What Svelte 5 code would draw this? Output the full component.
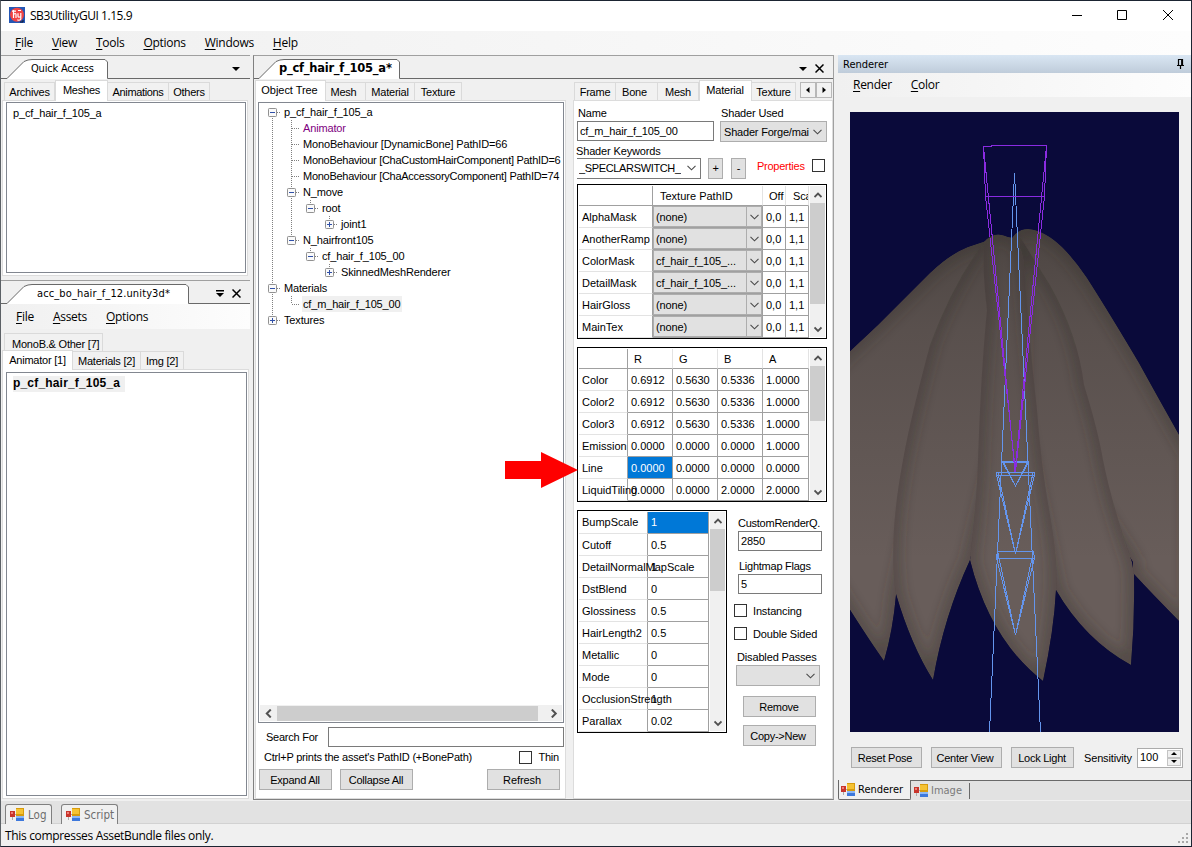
<script>
  const tree = [
    { d: 0, box: '-', text: 'p_cf_hair_f_105_a', through: [], next: true, first: true },
    { d: 1, text: 'Animator', through: [0], next: true, purple: true },
    { d: 1, text: 'MonoBehaviour [DynamicBone] PathID=66', through: [0], next: true },
    { d: 1, text: 'MonoBehaviour [ChaCustomHairComponent] PathID=6', through: [0], next: true, long: true },
    { d: 1, text: 'MonoBehaviour [ChaAccessoryComponent] PathID=74', through: [0], next: true, long: true },
    { d: 1, box: '-', text: 'N_move', through: [0], next: true },
    { d: 2, box: '-', text: 'root', through: [0, 1] },
    { d: 3, box: '+', text: 'joint1', through: [0, 1] },
    { d: 1, box: '-', text: 'N_hairfront105', through: [0] },
    { d: 2, box: '-', text: 'cf_hair_f_105_00', through: [0] },
    { d: 3, box: '+', text: 'SkinnedMeshRenderer', through: [0] },
    { d: 0, box: '-', text: 'Materials', through: [], next: true },
    { d: 1, text: 'cf_m_hair_f_105_00', through: [0], sel: true },
    { d: 0, box: '+', text: 'Textures', through: [] }
  ];
  const textures = [
    ['AlphaMask', '(none)'], ['AnotherRamp', '(none)'], ['ColorMask', 'cf_hair_f_105_...'],
    ['DetailMask', 'cf_hair_f_105_...'], ['HairGloss', '(none)'], ['MainTex', '(none)']
  ];
  const colors = [
    ['Color', '0.6912', '0.5630', '0.5336', '1.0000'],
    ['Color2', '0.6912', '0.5630', '0.5336', '1.0000'],
    ['Color3', '0.6912', '0.5630', '0.5336', '1.0000'],
    ['Emission', '0.0000', '0.0000', '0.0000', '1.0000'],
    ['Line', '0.0000', '0.0000', '0.0000', '0.0000'],
    ['LiquidTiling', '0.0000', '0.0000', '2.0000', '2.0000']
  ];
  const scalars = [
    ['BumpScale', '1'], ['Cutoff', '0.5'], ['DetailNormalMapScale', '1'], ['DstBlend', '0'],
    ['Glossiness', '0.5'], ['HairLength2', '0.5'], ['Metallic', '0'], ['Mode', '0'],
    ['OcclusionStrength', '1'], ['Parallax', '0.02']
  ];
  const strands = [
    { id: 's1', d: 'M1012 238 Q1018 229 1028 229 Q1044 230 1062 247 Q1075 260 1087 278 Q1110 314 1139 363 Q1166 412 1190 454 L1190 632 Q1155 597 1133 573 L1133 562 L1080 480 L1014 300Z' },
    { id: 's2', d: 'M1020 236 Q1028 250 1050 285 Q1078 335 1084 385 Q1098 430 1103 460 Q1112 505 1132 562 L1134 574 Q1135 620 1131 665 Q1085 640 1056 590 L1020 420Z' },
    { id: 's3', d: 'M830 370 L878 325 L930 273 Q950 254 968 247 L983 242 L994 238 L990 300 L960 380 L915 500 L896 595 Q893 630 884 661 Q866 636 830 578Z' },
    { id: 's4', d: 'M1000 236 L980 247 Q950 290 930 345 Q910 420 903 460 Q888 540 896 594 Q911 645 933 680 Q944 616 970 560 L1004 420 L1008 250Z' },
    { id: 's5', d: 'M984 242 Q994 230 1008 237 Q1020 238 1024 262 Q1028 330 1037 410 Q1041 465 1049 510 Q1058 560 1056 590 Q1054 630 1043 681 Q990 640 970 560 Q977 500 978 460 Q981 370 987 310 Q982 270 984 242Z' }
  ];
</script>

{#snippet chev(dir, s = 8)}
  <svg class="chev" width={s} height={s} viewBox="0 0 8 8">
    <path d={{ up: 'M.5 6 4 2.5 7.5 6', down: 'M.5 2.5 4 6 7.5 2.5', left: 'M6 .5 2.5 4 6 7.5', right: 'M2.5 .5 6 4 2.5 7.5' }[dir]} fill="none" stroke="#505050" stroke-width="1.8" />
  </svg>
{/snippet}

{#snippet thin()}
  <svg class="thin" width="9" height="6" viewBox="0 0 9 6"><path d="M.5 .8 4.5 4.8 8.5 .8" fill="none" stroke="#4a4a4a" stroke-width="1.1" /></svg>
{/snippet}

{#snippet vscroll(h)}
  <div class="vs"><div class="arrow">{@render chev('up')}</div><div class="thumb" style="height:{h}px"></div><div class="arrow end">{@render chev('down')}</div></div>
{/snippet}

{#snippet form()}
  <svg class="formicon" width="14" height="14" viewBox="0 0 14 14" shape-rendering="crispEdges">
    <rect x="6" y="0" width="8" height="8" fill="#d79b0c" /><rect x="6" y="1" width="7" height="5" fill="#f5c233" />
    <rect x="6" y="8" width="8" height="5" fill="#3d78dc" /><rect x="6" y="8" width="8" height="2" fill="#8db8f5" />
    <rect x="0" y="3" width="5" height="6" fill="#c9352c" /><rect x="1" y="4" width="2" height="2" fill="#ee8178" /><path d="M2.5 9v3M5 6.5h1" stroke="#aaa" />
  </svg>
{/snippet}

{#snippet close()}
  <svg class="x" width="9" height="9" viewBox="0 0 9 9"><path d="M.5 .5 8.5 8.5M8.5 .5 .5 8.5" stroke="#000" stroke-width="1.5" /></svg>
{/snippet}

{#snippet sheet(w, label, bold = false)}
  <div class="sheet" style="width:{w}px">
    <svg width={w} height="23" viewBox="0 0 {w} 23">
      <path d="M0 23.5V22.5L17 5.5Q21 3.5 25 3.5H{w - 3}L{w - 0.5} 6V23.5Z" fill="#fff" />
      <path d="M0 22.5L17 5.5Q21 3.5 25 3.5H{w - 3}L{w - 0.5} 6V22.5" fill="none" stroke="#696969" />
    </svg>
    <span class:bold>{label}</span>
  </div>
{/snippet}

<div class="window">
  <header class="title">
    <svg width="16" height="16" viewBox="0 0 16 16">
      <rect width="16" height="16" fill="#2457b5" /><circle cx="8" cy="7.8" r="7" fill="#f04444" />
      <path d="M4.5 3v8M4.5 7.5q2.5-2 2.5 0V11M3 4.2h4M9 6.2v3q0 1.6 2.8.5V6M11.8 9v3q-1.2 2-3.5.8M9 3.5h3" fill="none" stroke="#fff" stroke-width="1.2" />
      <path d="M11 15h3v-2" stroke="#101830" fill="none" />
    </svg>
    <span class="caption">SB3UtilityGUI 1.15.9</span>
    <svg class="winbtns" width="102" height="12" viewBox="0 0 102 12" fill="none" stroke="#000">
      <path d="M0 6.5H10M45.5 1.5h9v9h-9zM91 1l10 10M101 1 91 11" />
    </svg>
  </header>
  <nav class="menu main">
    <span><u>F</u>ile</span><span><u>V</u>iew</span><span><u>T</u>ools</span><span><u>O</u>ptions</span><span><u>W</u>indows</span><span><u>H</u>elp</span>
  </nav>

  <main>
    <section class="left">
      <div class="pane quick">
        <div class="strip">
          {@render sheet(101, 'Quick Access')}
          <svg class="tri" width="8" height="4" viewBox="0 0 8 4"><path d="M0 0h8L4 4z" /></svg>
        </div>
        <div class="tabs t1"><span>Archives</span><span class="on">Meshes</span><span>Animations</span><span>Others</span></div>
        <div class="page p1"><div class="list"><p>p_cf_hair_f_105_a</p></div></div>
      </div>
      <div class="pane asset">
        <div class="strip">
          {@render sheet(182, 'acc_bo_hair_f_12.unity3d*')}
          <svg class="tri" width="8" height="7" viewBox="0 0 8 7"><path d="M0 0h8v1.6H0zM0 3h8L4 7z" /></svg>
          {@render close()}
        </div>
        <nav class="menu sub"><span><u>F</u>ile</span><span><u>A</u>ssets</span><span><u>O</u>ptions</span></nav>
        <div class="tabs t2"><span>MonoB.&amp; Other [7]</span></div>
        <div class="tabs t3"><span class="on">Animator [1]</span><span>Materials [2]</span><span>Img [2]</span></div>
        <div class="page p2"><div class="list"><p class="b">p_cf_hair_f_105_a</p></div></div>
      </div>
    </section>

    <section class="middle">
      <div class="strip">
        {@render sheet(141, 'p_cf_hair_f_105_a*', true)}
        <svg class="tri" width="8" height="4" viewBox="0 0 8 4"><path d="M0 0h8L4 4z" /></svg>
        {@render close()}
      </div>
      <div class="split">
        <div class="objects">
          <div class="tabs t4"><span class="on">Object Tree</span><span>Mesh</span><span>Material</span><span>Texture</span></div>
          <div class="page p3">
            <div class="tree">
              <div class="rows">
                {#each tree as r}
                  <div class="node">
                    <svg width={24 + 19 * r.d} height="16">
                      <g stroke="#808080" stroke-dasharray="1 1" fill="none">
                        {#each r.through as t}
                          {#if !(t === r.d)}<path d="M{13.5 + 19 * t} 0V16" />{/if}
                        {/each}
                        {#if !r.first}<path d="M{13.5 + 19 * r.d} 0V8" />{/if}
                        {#if r.next}<path d="M{13.5 + 19 * r.d} 8V16" />{/if}
                        <path d="M{14 + 19 * r.d} 8.5h8" />
                      </g>
                      {#if r.box}
                        <rect x={9.5 + 19 * r.d} y="4.5" width="8" height="8" rx=".8" fill="#fafafa" stroke="#919191" />
                        <path d="M{11 + 19 * r.d} 8.5h5{r.box === '+' ? `M${13.5 + 19 * r.d} 6v5` : ''}" stroke="#3050a8" fill="none" />
                      {/if}
                    </svg>
                    <span class:purple={r.purple} class:sel={r.sel} class:long={r.long}>{r.text}</span>
                  </div>
                {/each}
              </div>
              <div class="hs">{@render chev('left', 9)}<div></div>{@render chev('right', 9)}</div>
            </div>
            <div class="search"><span>Search For</span><i class="field"></i></div>
            <div class="note"><span>Ctrl+P prints the asset's PathID (+BonePath)</span><i class="check"></i><span>Thin</span></div>
            <div class="btns"><b class="btn">Expand All</b><b class="btn">Collapse All</b><b class="btn">Refresh</b></div>
          </div>
        </div>

        <div class="detail">
          <div class="tabs t5">
            <span>Frame</span><span>Bone</span><span>Mesh</span><span class="on">Material</span><span>Texture</span>
            <div class="scroller"><i><svg width="4" height="6"><path d="M3.5 0v6L0 3z" /></svg></i><i><svg width="4" height="6"><path d="M.5 0v6L4 3z" /></svg></i></div>
          </div>
          <div class="page p4">
            <div class="labels"><span>Name</span><span>Shader Used</span></div>
            <div class="inputs"><i class="field name">cf_m_hair_f_105_00</i><div class="combo gray"><span>Shader Forge/mai</span>{@render thin()}</div></div>
            <div class="kwlabel">Shader Keywords</div>
            <div class="kw">
              <div class="combo open"><span>_SPECLARSWITCH_</span>{@render thin()}</div>
              <b class="btn sq">+</b><b class="btn sq">-</b><span class="red">Properties</span><i class="check"></i>
            </div>

            <div class="grid tex">
              <div class="cells">
                <span class="h"></span><span class="h">Texture PathID</span><span class="h">Off</span><span class="h">Sca</span>
                {#each textures as [n, v]}
                  <span class="rh">{n}</span><span class="cc"><em>{v}</em><i>{@render thin()}</i></span><span>0,0</span><span>1,1</span>
                {/each}
              </div>
              {@render vscroll(101)}
            </div>

            <div class="grid col">
              <div class="cells">
                <span class="h"></span><span class="h">R</span><span class="h">G</span><span class="h">B</span><span class="h">A</span>
                {#each colors as row, i}
                  {#each row as v, j}<span class:rh={j === 0} class:hot={i === 4 && j === 1}>{v}</span>{/each}
                {/each}
              </div>
              {@render vscroll(55)}
            </div>

            <div class="lower">
              <div class="grid num">
                <div class="cells">
                  {#each scalars as [n, v], i}<span class="rh" class:top={i === 0}>{n}</span><span class:hot={i === 0} class:top={i === 0}>{v}</span>{/each}
                </div>
                {@render vscroll(62)}
              </div>
              <div class="side">
                <span class="lb">CustomRenderQ.</span><i class="field">2850</i>
                <span class="lb two">Lightmap Flags</span><i class="field">5</i>
                <div class="ck"><i class="check"></i><span>Instancing</span></div>
                <div class="ck"><i class="check"></i><span>Double Sided</span></div>
                <span class="lb three">Disabled Passes</span>
                <div class="combo gray">{@render thin()}</div>
                <b class="btn">Remove</b><b class="btn">Copy-&gt;New</b>
              </div>
            </div>
          </div>
        </div>
      </div>
      <svg class="pointer" width="74" height="38" viewBox="0 0 74 38"><path d="M0 10H36V1L73 19 36 37V28H0Z" fill="#fe0000" /></svg>
    </section>

    <section class="right">
      <div class="rhead"><span>Renderer</span><svg width="7" height="10" viewBox="0 0 7 10"><path d="M1.5 6V.5h4V6M4.7 0v6M0 6.5h7M3.5 7v3" fill="none" stroke="#000" stroke-width="1.2" /></svg></div>
      <nav class="menu rm"><span><u>R</u>ender</span><span><u>C</u>olor</span></nav>
      <svg class="view" width="329" height="620" viewBox="850 112 329 620">
        <defs>
          <filter id="soft" filterUnits="userSpaceOnUse" x="780" y="180" width="480" height="560"><feGaussianBlur stdDeviation="7" /></filter>
          <linearGradient id="shade" gradientUnits="userSpaceOnUse" x1="0" y1="232" x2="0" y2="560">
            <stop offset="0" stop-color="#24221f" stop-opacity=".4" /><stop offset=".3" stop-color="#2c2927" stop-opacity=".25" /><stop offset="1" stop-color="#2c2927" stop-opacity="0" />
          </linearGradient>
          {#each strands as s}<clipPath id={s.id}><path d={s.d} /></clipPath>{/each}
        </defs>
        <rect x="850" y="112" width="329" height="620" fill="#0a0a3a" />
        {#each strands as s}
          <g clip-path="url(#{s.id})">
            <path d={s.d} fill="#685d5a" />
            <path d={s.d} fill="none" stroke="#35322e" stroke-opacity=".6" stroke-width="9" filter="url(#soft)" />
            <path d={s.d} fill="url(#shade)" />
          </g>
        {/each}
        <g fill="none" stroke="#6495ed" shape-rendering="crispEdges">
          <path d="M1014.5 173 989.5 732M1014.5 173 1040.5 732" />
          <path d="M1002 461.5H1028.5M1002 462.5H1028.5L1015.5 486 1002.5 462M1004 463 1015 485M1027 463 1016 485" />
          <path d="M996.5 472.5H1034.5V475.5H996.5ZM996.5 475 1015.5 554 1034.5 475M998 473 1015.5 554 1033 473" />
          <path d="M997 551.5H1033M996 558.5H1034M997.5 551 996.5 558 1015.5 635 1034.5 558 1033.5 551 1015.5 635 997.5 551" />
        </g>
        <path d="M983.5 146.5H991V145.5H1046.5L1044.5 196.5H985.5L983.5 146.5 1015 472 1046.5 146M985.5 196 1015.5 472 1044.5 196" fill="none" stroke="#8a2be2" shape-rendering="crispEdges" />
      </svg>
      <div class="rbtns">
        <b class="btn">Reset Pose</b><b class="btn">Center View</b><b class="btn k">Lock Light</b><span>Sensitivity</span>
        <div class="spin"><span>100</span><div><i><svg width="6" height="3"><path d="M0 3h6L3 0z" /></svg></i><i><svg width="6" height="3"><path d="M0 0h6L3 3z" /></svg></i></div></div>
      </div>
      <div class="rtabs"><div class="on">{@render form()}<span>Renderer</span></div><div class="off">{@render form()}<span>Image</span></div></div>
    </section>
  </main>

  <div class="dock"><div>{@render form()}<span>Log</span></div><div>{@render form()}<span>Script</span></div></div>
  <footer><span>This compresses AssetBundle files only.</span>
    <svg width="11" height="11" fill="#a8a8a8"><path d="M8 0h2v2H8zM4 4h2v2H4zM8 4h2v2H8zM0 8h2v2H0zM4 8h2v2H4zM8 8h2v2H8z" /></svg>
  </footer>
</div>

<style>
  :global(body) { margin: 0; }
  .window, .window * { box-sizing: border-box; }
  .window { width: 1192px; height: 847px; display: flex; flex-direction: column; background: #f0f0f0; border: 1px solid #1b2432; border-left-color: #5c6166; overflow: hidden; font: 11px/14px 'Liberation Sans', Arial, sans-serif; letter-spacing: -.15px; color: #000; white-space: nowrap; }
  svg { display: block; flex: none; }
  i, em { font-style: normal; }
  b { font-weight: normal; }
  p { margin: 0; }
  u { text-underline-offset: 1.5px; text-decoration-thickness: 1px; }

  .title { height: 30px; flex: none; background: #fff; display: flex; align-items: center; padding: 0 17px 2px 8px; }
  .caption { margin: 2px 0 0 5px; font: 12px/16px 'Open Sans', sans-serif; letter-spacing: -.46px; }
  .winbtns { margin-left: auto; }
  .menu { display: flex; flex: none; align-items: center; background: linear-gradient(90deg, #f0f0f0, #fdfdfd); font: 12px/16px 'Open Sans', sans-serif; letter-spacing: -.28px; }
  .menu.main { height: 24px; padding-left: 14px; gap: 19px; }
  main { display: flex; height: 745px; flex: none; }

  .left { width: 252px; flex: none; padding-right: 3px; }
  .pane { border-top: 1px solid #a0a0a0; }
  .quick { height: 225px; }
  .strip { height: 23px; flex: none; display: flex; align-items: center; border-bottom: 1px solid #696969; padding-left: 6px; }
  .sheet { height: 23px; flex: none; display: grid; align-self: flex-start; }
  .sheet > * { grid-area: 1 / 1; }
  .sheet span { z-index: 1; font: 11px/15px 'DejaVu Sans Condensed', 'DejaVu Sans', sans-serif; letter-spacing: -.2px; padding: 5px 0 0 24px; }
  .sheet .bold { font: bold 11.5px/15px 'DejaVu Sans', sans-serif; letter-spacing: -.25px; padding-left: 20px; }
  .asset .sheet span { padding-left: 30px; letter-spacing: .12px; }
  .tri { margin: 3px 10px 0 auto; }
  .asset .tri { margin-right: 8px; }
  .asset .x { margin: 2px 9px 0 0; }

  .tabs { display: flex; align-items: flex-end; position: relative; z-index: 1; letter-spacing: -.22px; }
  .tabs > span { height: 18px; border: 1px solid #dadada; border-width: 1px 1px 0 0; padding: 2px 0 0; text-align: center; background: #f1f1f1; }
  .tabs > span:first-child { border-left-width: 1px; }
  .tabs > .on { height: 21px; margin-bottom: -1px; background: #fff; border-left-width: 1px; }
  .t1 { height: 21px; padding-left: 3px; }
  .t1 > :nth-child(1) { width: 51px; } .t1 > :nth-child(2) { width: 53px; } .t1 > :nth-child(3) { width: 61px; letter-spacing: -.35px; } .t1 > :nth-child(4) { width: 41px; }
  .page { background: #fff; border: 1px solid #dcdcdc; }
  .p1 { margin: 0 2px 0 1px; height: 176px; padding: 1px 1px 2px 3px; }
  .list { height: 100%; border: 1px solid #828790; padding: 3px 6px; }
  .list .b { display: inline-block; background: #f0f0f0; font-weight: bold; font-size: 12px; padding: 0 5px 2px 0; letter-spacing: .18px; height: 16px; }
  .asset { height: 520px; }
  .menu.sub { height: 25px; padding-left: 15px; gap: 19px; }
  .t2 { height: 22px; padding-left: 3px; }
  .t2 > span { width: 99px; padding: 3px 0 0 7px; text-align: left; }
  .t3 { height: 18px; padding-left: 1px; }
  .t3 > :nth-child(1) { width: 71px; height: 20px; } .t3 > :nth-child(2) { width: 68px; } .t3 > :nth-child(3) { width: 43px; }
  .p2 { height: 430px; margin: 0 1px; padding: 2px 1px 2px 3px; }

  .middle { width: 581px; flex: none; position: relative; border: 1px solid #808080; border-top-color: #a0a0a0; border-right-color: #a0a0a0; display: flex; flex-direction: column; }
  .middle .tri { margin-right: 8px; }
  .middle .x { margin: 2px 9px 0 0; }
  .middle .strip { padding-left: 5px; }
  .split { display: flex; justify-content: space-between; height: 720px; }
  .objects { width: 312px; }
  .detail { width: 260px; }
  .t4 { height: 21px; padding-left: 1px; }
  .t4 > :nth-child(1) { width: 71px; letter-spacing: -.05px; padding-right: 2px; } .t4 > :nth-child(2) { width: 40px; padding-right: 4px; } .t4 > :nth-child(3) { width: 49px; } .t4 > :nth-child(4) { width: 47px; }
  .p3 { margin-left: 1px; width: 311px; height: 699px; padding: 1px 1px 0 2px; }
  .tree { width: 306px; height: 621px; border: 1px solid #828790; display: flex; flex-direction: column; padding: 1px; }
  .rows { flex: 1; overflow: hidden; margin-left: -1px; }
  .node { display: flex; height: 16px; align-items: center; }
  .node span { height: 16px; line-height: 16px; padding-left: 1px; letter-spacing: -.16px; }
  .node .long { letter-spacing: -.28px; }
  .node .purple { color: #800080; }
  .node .sel { background: #f0f0f0; padding-right: 2px; }
  .hs { height: 16px; background: #f0f0f0; display: flex; align-items: center; justify-content: space-between; padding: 0 4px; }
  .hs div { width: 261px; height: 15px; background: #cdcdcd; margin-right: 7px; }
  .search { display: flex; align-items: center; margin: 4px 0 0 8px; width: 298px; letter-spacing: -.25px; }
  .search .field { width: 236px; margin-left: auto; height: 20px; }
  .field { display: block; border: 1px solid #7a7a7a; background: #fff; padding: 2px 2px 0; line-height: 14px; }
  .note { display: flex; align-items: center; height: 20px; width: 301px; padding-left: 6px; letter-spacing: -.22px; margin-bottom: 2px; }
  .note .check { margin: 0 6px 0 auto; }
  .check { width: 13px; height: 13px; border: 1px solid #333; background: #fff; flex: none; }
  .btn { display: flex; align-items: center; justify-content: center; background: #e1e1e1; border: 1px solid #adadad; height: 21px; width: 73px; flex: none; letter-spacing: -.25px; padding-right: 1px; }
  .btns { display: flex; margin: 1px 0 0 1px; }
  .btns :nth-child(2) { margin-left: 8px; }
  .btns :nth-child(3) { margin-left: 74px; padding-right: 3px; letter-spacing: -.1px; }

  .t5 { height: 21px; padding-left: 1px; }
  .t5 > :nth-child(1) { width: 42px; } .t5 > :nth-child(2) { width: 42px; padding-right: 4px; } .t5 > :nth-child(3) { width: 41px; } .t5 > :nth-child(4) { width: 53px; padding-right: 1px; } .t5 > :nth-child(5) { width: 44px; }
  .scroller { display: flex; margin: 0 0 2px 4px; }
  .scroller i { width: 16px; height: 16px; border: 1px solid #b8b8b8; background: #f2f2f2; display: grid; place-items: center; }
  .p4 { width: 260px; height: 699px; padding: 5px 3px 0; }
  .labels { display: flex; height: 15px; padding-left: 1px; }
  .labels :first-child { width: 143px; }
  .inputs { display: flex; justify-content: space-between; width: 250px; }
  .name { width: 137px; height: 20px; }
  .combo { display: flex; align-items: center; justify-content: space-between; height: 21px; padding: 0 4px 0 3px; overflow: hidden; }
  .combo span { overflow: hidden; }
  .combo.gray { background: #e1e1e1; border: 1px solid #adadad; width: 107px; }
  .combo.gray span { width: 86px; letter-spacing: -.2px; }
  .combo.open { width: 124px; height: 21px; border: 1px solid #7a7a7a; border-left: 0; padding-left: 2px; letter-spacing: -.35px; }
  .kwlabel { height: 15px; line-height: 18px; margin-left: -1px; }
  .kw { display: flex; align-items: center; height: 22px; }
  .sq { width: 15px; margin-left: 7px; padding: 0; }
  .sq + .sq { margin-left: 8px; }
  .red { color: #f00; margin: -5px 7px 0 11px; width: 48px; letter-spacing: -.25px; }
  .kw .check { margin-top: -6px; }

  .grid { width: 250px; height: 155px; border: 1px solid #000; display: flex; justify-content: space-between; padding: 1px 1px 0; background: #fff; letter-spacing: 0; }
  .tex { margin-top: 5px; }
  .col { margin-top: 8px; }
  .cells { display: grid; grid-auto-rows: 22px; align-content: start; }
  .tex .cells { grid-template: 20px / 74px 110px 23px 23px; }
  .col .cells { grid-template: 20px / 49px 45px 45px 45px 46px; }
  .cells > span { border: solid #a0a0a0; border-width: 0 1px 1px 0; padding: 4px 0 0 3px; min-width: 0; line-height: 15px; }
  .cells > .rh { border-bottom-color: #e3e3e3; }
  .cells > .top { padding-top: 3px; }
  .cells > .h { padding: 3px 0 0 7px; border-right-color: #e3e3e3; overflow: hidden; }
  .col .cells > .h { padding-left: 6px; }
  .cells > .h:first-child { border-right-color: #a0a0a0; }
  .tex .h:nth-child(3), .tex .h:nth-child(4) { padding-left: 6px; }
  .tex .cells > .h:nth-child(4) { padding-left: 7px; letter-spacing: -.2px; }
  .cells > .cc { padding: 0; background: #e1e1e1; display: flex; box-shadow: inset 0 0 0 1px #adadad; }
  .cc em { flex: 1; padding: 4px 0 0 3px; letter-spacing: -.12px; }
  .cc i { width: 16px; border-left: 1px solid #adadad; display: grid; place-items: center; }
  .cells .hot { background: #0078d7; color: #fff; }
  .vs { width: 15px; background: #f0f0f0; display: flex; flex-direction: column; margin-bottom: 1px; }
  .arrow { height: 17px; display: grid; place-items: center; flex: none; }
  .arrow.end { margin-top: auto; }
  .thumb { background: #cdcdcd; }
  .lower { display: flex; margin-top: 8px; }
  .num { width: 150px; height: 223px; }
  .num .cells { grid-template-columns: 69px 61px; }
  .side { padding-left: 7px; display: flex; flex-direction: column; }
  .side .field { margin-left: 4px; width: 84px; height: 20px; }
  .lb { margin: 6px 0 1px 4px; letter-spacing: -.25px; }
  .lb.two { margin: 8px 0 1px 5px; }
  .ck { display: flex; gap: 6px; height: 23px; align-items: center; }
  .field + .ck { margin-top: 5px; }
  .lb.three { margin: 5px 0 1px 3px; letter-spacing: -.15px; }
  .side .combo { width: 84px; justify-content: flex-end; margin-left: 2px; }
  .side .btn { margin: 10px 0 0 9px; }
  .side .btn + .btn { margin-top: 8px; padding-right: 3px; }
  .pointer { position: absolute; left: 251px; top: 395px; z-index: 3; }

  .right { flex: 1; margin-left: 4px; display: flex; flex-direction: column; }
  .rhead { height: 18px; flex: none; display: flex; align-items: center; justify-content: space-between; padding: 0 7px 0 5px; background: linear-gradient(#d9e6f3, #bfccda); font: 11px/16px 'DejaVu Sans Condensed', 'DejaVu Sans', sans-serif; letter-spacing: 0; }
  .rhead span { padding-top: 2px; }
  .menu.rm { height: 24px; padding-left: 15px; gap: 19px; }
  .view { margin: 15px 0 0 12px; }
  .rbtns { display: flex; align-items: center; margin: 15px 0 0 13px; height: 21px; }
  .rbtns .btn { width: 71px; margin-right: 9px; padding-right: 3px; }
  .rbtns .k { width: 63px; padding-right: 1px; margin-right: 10px; }
  .spin { display: flex; margin-left: auto; margin-right: 8px; width: 46px; height: 20px; border: 1px solid #ababab; background: #fff; padding: 1px; letter-spacing: 0; }
  .spin > span { flex: 1; padding-left: 1px; }
  .spin i { display: grid; place-items: center; width: 14px; height: 8px; background: #f0f0f0; border: 1px solid #c4c4c4; }
  .rtabs { display: flex; margin-top: 12px; height: 20px; background: #e2e2e2; font: 11px/16px 'DejaVu Sans Condensed', 'DejaVu Sans', sans-serif; letter-spacing: 0; }
  .rtabs > div { display: flex; align-items: center; gap: 3px; }
  .rtabs .on { width: 73px; background: #f0f0f0; border: 1px solid #696969; border-top: 0; border-radius: 0 0 2px 2px; padding-left: 2px; }
  .rtabs .off { flex: 1; border-top: 1px solid #696969; color: #7a7a7a; padding-left: 3px; }
  .off span { border-right: 1px solid #696969; padding-right: 7px; }
  .dock { height: 24px; flex: none; background: #e2e2e2; border-top: 1px solid #f0f0f0; border-bottom: 1px solid #d2d2d2; display: flex; gap: 9px; padding: 3px 0 0 4px; font: 11.5px/16px 'DejaVu Sans Condensed', 'DejaVu Sans', sans-serif; letter-spacing: 0; color: #6d6d6d; }
  .dock div { display: flex; align-items: center; gap: 4px; border: 1px solid #808080; border-bottom: 0; border-radius: 3px 3px 0 0; background: #f0f0f0; padding: 0 0 0 4px; height: 20px; width: 47px; }
  .dock div + div { width: 57px; }
  footer { flex: 1; display: flex; justify-content: space-between; align-items: center; padding: 2px 2px 0 4px; font: 12px/16px 'Open Sans', sans-serif; letter-spacing: -.33px; }
  footer svg { align-self: flex-end; margin-bottom: 2px; }
</style>
